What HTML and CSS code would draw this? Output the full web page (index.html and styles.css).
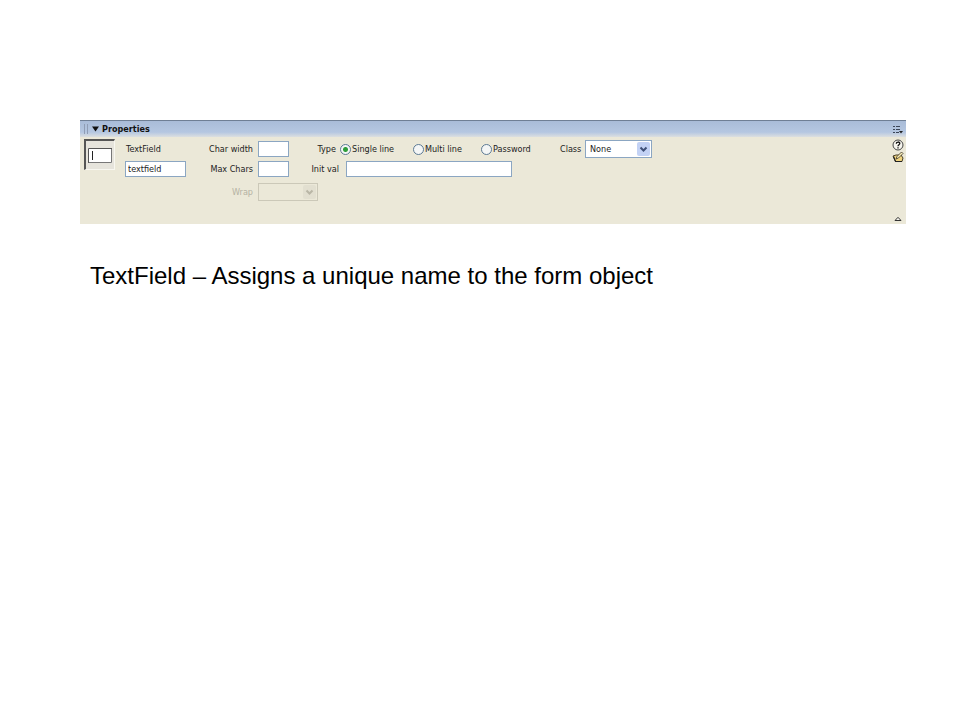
FILE: index.html
```html
<!DOCTYPE html>
<html lang="en">

<head>
    <meta charset="UTF-8">
    <meta name="viewport" content="width=device-width, initial-scale=1.0">
    <title>TextField properties</title>
    <link rel="stylesheet" href="styles.css">
</head>

<body>
    <section class="panel">
        <header class="panel-header">
            <span class="grip"></span>
            <svg class="arrow" width="7" height="6" viewBox="0 0 7 6"><path d="M0 0.5h7L3.5 5.5z" fill="#111"/></svg>
            <h1>Properties</h1>
            <button class="icon-btn menu-btn" aria-label="Panel menu">
                <svg width="11" height="9" viewBox="0 0 11 9">
                    <path d="M1 1.5h2M1 4.5h2M1 7.5h2M4 1.5h4M4 4.5h4M4 7.5h3" stroke="#3c4658" fill="none"/>
                    <path d="M7 6h4L9 8.500z" fill="#222"/>
                </svg>
            </button>
        </header>

        <form class="panel-body">
            <div class="preview"><svg width="24" height="15" viewBox="0 0 24 15">
                <path d="M0 0h24v15H0z" fill="#fff"/>
                <path d="M0.500 15V0.500H24" stroke="#555" fill="none"/>
                <path d="M1 14.500H23.500V1" stroke="#777" fill="none"/>
                <path d="M4.500 3v9" stroke="#222"/>
            </svg></div>

            <div class="group name-group">
                <label for="name">TextField</label>
                <input class="box" type="text" id="name" value="textfield">
            </div>

            <div class="group size-group">
                <div class="row">
                    <label for="width">Char width</label>
                    <input class="box small" type="text" id="width">
                </div>
                <div class="row">
                    <label for="max">Max Chars</label>
                    <input class="box small" type="text" id="max">
                </div>
                <div class="row wrap-row">
                    <label for="wrap">Wrap</label>
                    <span class="select disabled">
                        <select id="wrap" disabled><option></option></select>
                        <svg width="13" height="14" viewBox="0 0 13 14"><path d="M3.500 5.500l3 3 3-3" stroke="#b9b6a6" stroke-width="2" fill="none"/></svg>
                    </span>
                </div>
            </div>

            <div class="group type-group">
                <div class="row types" role="radiogroup" aria-labelledby="type">
                    <span class="type-label" id="type">Type</span>
                    <label><input type="radio" name="type" checked>Single line</label>
                    <label><input type="radio" name="type">Multi line</label>
                    <label><input type="radio" name="type">Password</label>
                </div>
                <div class="row">
                    <label class="init-label" for="init">Init val</label>
                    <input class="box init" type="text" id="init">
                </div>
            </div>

            <div class="row class-row">
                <label for="class">Class</label>
                <span class="select">
                    <select id="class"><option>None</option></select>
                    <svg width="13" height="14" viewBox="0 0 13 14"><path d="M3.500 5.500l3 3 3-3" stroke="#3f5078" stroke-width="2" fill="none"/></svg>
                </span>
            </div>

            <div class="tools">
                <button class="icon-btn" type="button" aria-label="Help">
                    <svg width="12" height="12" viewBox="0 0 12 12">
                        <circle cx="6" cy="6" r="5" fill="#f6f5ee" stroke="#444"/>
                        <path d="M4.300 4.700c0-2.200 3.500-2.200 3.500-.2C7.800 5.700 6 5.700 6 7.200M6 8.200v1.300" stroke="#111" stroke-width="1.300" fill="none"/>
                    </svg>
                </button>
                <button class="icon-btn" type="button" aria-label="Edit tag">
                    <svg width="12" height="12" viewBox="0 0 12 12">
                        <path d="M1 5l3-1h5l2 3-1 3.500H3.500z" fill="#efd37e" stroke="#4a4028"/>
                        <path d="M1.500 5.500l2 5H10" stroke="#222" stroke-width="1.200" fill="none"/>
                        <path d="M4 8L5 5.500 9.500 1 11 2.500 6.500 7z" fill="#f8ecba" stroke="#3a3222" stroke-width=".8"/>
                    </svg>
                </button>
                <button class="icon-btn collapse" type="button" aria-label="Collapse">
                    <svg width="8" height="6" viewBox="0 0 8 6"><path d="M1 4.500h6L4 1.300z" fill="#f6f5ee" stroke="#333"/></svg>
                </button>
            </div>
        </form>
    </section>

    <p class="caption">TextField – Assigns a unique name to the form object</p>
</body>

</html>
```
FILE: styles.css
```css
* {
    box-sizing: border-box;
}

body {
    margin: 0;
    padding: 120px 54px 0 80px;
    background-color: #fff;
    color: #000;
    font-family: "Liberation Sans", Arial, sans-serif;
}

.panel {
    background-color: #ebe8d8;
    color: #222;
    font-family: Tahoma, "DejaVu Sans Condensed", "Noto Sans", sans-serif;
    font-size: 9px;
    line-height: 16px;
}

.panel-header {
    display: flex;
    align-items: center;
    height: 17px;
    padding: 0 3px 0 4px;
    border-top: 1px solid #6f7f95;
    background: linear-gradient(#a9bcd8, #b5c7e1 70%, #dcdfe0);
}

.panel-header h1 {
    margin: 0;
    font-size: 9px;
    color: #111;
}

.grip {
    width: 4px;
    height: 10px;
    margin-right: 4px;
    border: solid #8f9db5;
    border-width: 0 1px;
}

.arrow {
    margin-right: 3px;
}

.icon-btn {
    display: block;
    padding: 0;
    border: none;
    background: none;
    line-height: 0;
}

.menu-btn {
    margin-left: auto;
}

.panel-body {
    display: flex;
    align-items: flex-start;
    padding: 2px 2px 2px 4px;
}

.preview {
    display: flex;
    align-items: center;
    justify-content: center;
    width: 31px;
    height: 31px;
    margin-right: 10px;
    border: 1px solid #f8f7f0;
    border-top: 2px solid #555;
    border-left: 2px solid #555;
    background-color: #e6e4dc;
}

.group {
    display: flex;
    flex-direction: column;
    gap: 4px;
    padding-top: 2px;
}

.row {
    display: flex;
    align-items: center;
    height: 16px;
    white-space: nowrap;
}

.name-group {
    width: 61px;
}

.name-group label {
    padding-left: 1px;
}

.box {
    height: 16px;
    padding: 0 2px;
    border: 1px solid #8ba6c2;
    background-color: #fff;
    color: #222;
    font: inherit;
}

.name-group .box {
    width: 100%;
}

.small {
    width: 31px;
}

.size-group {
    margin-left: 16px;
}

.size-group label {
    width: 51px;
    margin-right: 5px;
    text-align: right;
}

.wrap-row {
    margin-top: 3px;
    color: #b5b2a3;
}

.select {
    display: flex;
    position: relative;
    width: 67px;
    height: 18px;
}

.select select {
    appearance: none;
    width: 100%;
    padding: 0 4px;
    border: 1px solid #8ba6c2;
    border-radius: 0;
    background-color: #fff;
    color: #222;
    font: inherit;
}

.select svg {
    position: absolute;
    top: 2px;
    right: 2px;
    border-radius: 2px;
    background-color: #c3d2f5;
    pointer-events: none;
}

.disabled {
    width: 60px;
}

.disabled select {
    border-color: #cbc8b8;
    background-color: #ebe8d8;
    opacity: 1;
}

.disabled svg {
    background-color: #e2dfd0;
}

.type-group {
    width: 249px;
    margin-left: -7px;
}

.type-label,
.init-label {
    width: 28px;
    text-align: right;
}

.type-label {
    width: 25px;
}

.init-label {
    margin-right: 7px;
}

.init {
    width: 166px;
}

.types {
    display: grid;
    grid-template-columns: 29px 73px 68px auto;
}

.types label {
    display: flex;
    align-items: center;
    gap: 1px;
}

.types input {
    appearance: none;
    width: 11px;
    height: 11px;
    margin: 0;
    border: 1px solid #5c7a94;
    border-radius: 50%;
    background-color: #f4f6f6;
}

.types input:checked {
    background: radial-gradient(circle, #2f9e3a 2px, #f4f6f6 3px);
}

.class-row {
    height: 20px;
}

.class-row label {
    width: 21px;
    margin-right: 4px;
    text-align: right;
}

.tools {
    display: flex;
    flex-direction: column;
    align-items: center;
    align-self: stretch;
    min-height: 83px;
    margin-left: auto;
}

.collapse {
    margin-top: auto;
}

.caption {
    margin: 38px 10px 0;
    font-size: 24px;
    line-height: 28px;
}
```
